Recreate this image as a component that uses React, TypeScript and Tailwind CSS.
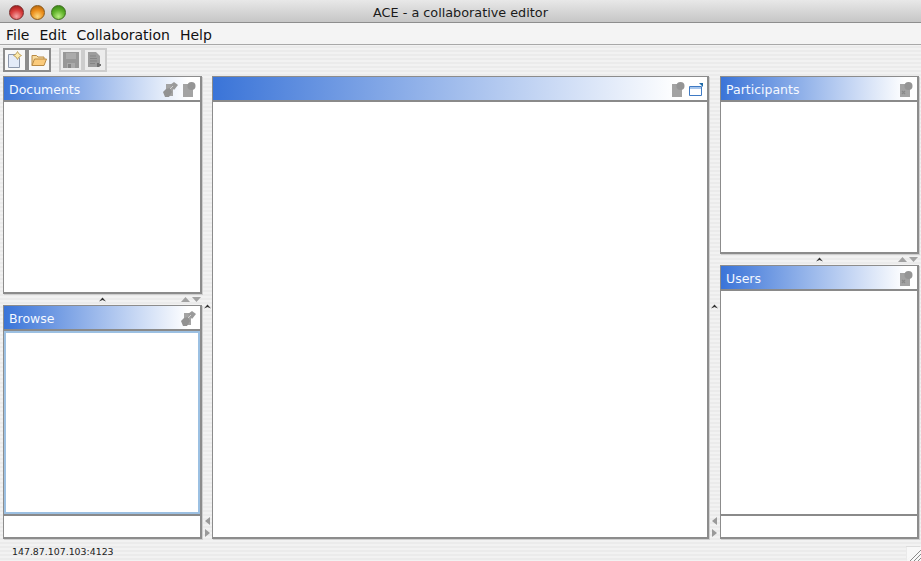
import type { ReactNode } from "react";

const FONT = "font-['DejaVu_Sans',sans-serif]";

function Lights() {
	return (
		<div className="flex items-center gap-[6px] pl-[9px]">
			<span className="h-[15px] w-[15px] rounded-full border border-[#7a2a2a] bg-[radial-gradient(circle_at_50%_80%,#f4a4a4_0%,#d83c3c_50%,#8f1414_100%)]" />
			<span className="h-[15px] w-[15px] rounded-full border border-[#8a5a1a] bg-[radial-gradient(circle_at_50%_80%,#fbd67c_0%,#ec8f1c_50%,#a85a08_100%)]" />
			<span className="h-[15px] w-[15px] rounded-full border border-[#3d6f1d] bg-[radial-gradient(circle_at_50%_80%,#b8ec80_0%,#5fb22a_50%,#2f7a10_100%)]" />
		</div>
	);
}

function ToolButton({ children, disabled }: { children: ReactNode; disabled?: boolean }) {
	return (
		<div
			className={`flex h-[24px] w-[24px] items-center justify-center border-2 ${
				disabled ? "border-[#cdcdcd] bg-[#ececec]" : "border-[#8c8c8c] bg-[#f8f8f8]"
			}`}
		>
			{children}
		</div>
	);
}

function NewIcon() {
	return (
		<svg width="16" height="18" viewBox="0 0 16 18">
			<path d="M1.5 3.5H9L12.5 7V16.5H1.5Z" fill="#e4ebf8" stroke="#8d98ac" />
			<path d="M10.5 0.5L12 3L14.5 4.5L12 6L10.5 8.5L9 6L6.5 4.5L9 3Z" fill="#fbe9ac" stroke="#b8954a" strokeWidth="0.8" />
		</svg>
	);
}

function OpenIcon() {
	return (
		<svg width="16" height="14" viewBox="0 0 16 14">
			<path d="M1 12.5V2.5H5.5L7 4H13V6" fill="#f8dca0" stroke="#b98a44" />
			<path d="M1 12.5L3.5 6H15.5L13 12.5Z" fill="#fbcb7c" stroke="#b98a44" />
		</svg>
	);
}

function SaveIcon() {
	return (
		<svg width="16" height="16" viewBox="0 0 16 16">
			<path d="M0 0H16V16H0Z" fill="#989898" />
			<path d="M3 1H13V7H3Z" fill="#ababab" />
			<path d="M4 11H12V16H4Z" fill="#ababab" />
			<path d="M5 12H8V16H5Z" fill="#868686" />
		</svg>
	);
}

function SaveAsIcon() {
	return (
		<svg width="16" height="16" viewBox="0 0 16 16">
			<path d="M1 0H9L13 4V15H1Z" fill="#9c9c9c" />
			<path d="M3 4H9M3 6.5H10M3 9H10M3 11.5H8" stroke="#858585" />
			<path d="M10 11H12V12H14V14H12V15H10Z" fill="#707070" />
		</svg>
	);
}

function UndockIcon() {
	return (
		<svg width="15" height="15" viewBox="0 0 15 15">
			<path d="M3 2H10V14H3Z" fill="#a3a3a3" />
			<path d="M7 3L11 0L15 3L11 8Z" fill="#9a9a9a" />
			<path d="M0 10L3 7L7 6L9 10L6 15H2Z" fill="#929292" />
			<path d="M7 7L10 4" stroke="#d0d0d0" />
		</svg>
	);
}

function PinIcon({ cross }: { cross?: boolean }) {
	return (
		<svg width="14" height="15" viewBox="0 0 14 15">
			<path d="M1 2H11V15H1Z" fill="#a3a3a3" />
			<circle cx="9.5" cy="4" r="4" fill="#959595" />
			{cross && <path d="M3 9L6 12M6 9L3 12" stroke="#8a8a8a" strokeWidth="1.2" />}
		</svg>
	);
}

function MaximizeIcon() {
	return (
		<svg width="14" height="13" viewBox="0 0 14 13">
			<path d="M0.5 3.5H12.5V12.5H0.5Z" fill="#fff" stroke="#3f7ac4" />
			<path d="M1 4H12V6H1Z" fill="#a8c6ec" />
			<path d="M10 0H14V4Z" fill="#1f6aa8" />
		</svg>
	);
}

function Panel({
	title,
	icons,
	className,
	children,
}: {
	title?: string;
	icons: ReactNode;
	className?: string;
	children?: ReactNode;
}) {
	return (
		<div
			className={`flex min-h-0 flex-col border border-[#8c8c8c] border-r-2 border-b-2 bg-white shadow-[1px_1px_0_#cfcfcf] ${className ?? ""}`}
		>
			<div className="flex h-[25px] shrink-0 items-center justify-between border-b-2 border-[#8a8a8a] bg-[linear-gradient(to_right,#3a74d8,#ffffff_94%)] pr-[4px] pl-[5px]">
				<span className="pt-[3px] text-[12.5px] text-[#f4f8ff]">{title}</span>
				<div className="flex items-center gap-[4px] pt-[1px]">{icons}</div>
			</div>
			{children ?? <div className="flex-1 bg-white" />}
		</div>
	);
}

function Grip() {
	return (
		<svg width="7" height="5" viewBox="0 0 7 5">
			<path d="M0 4.5L3.5 0.5L7 4.5L3.5 3Z" fill="#333" />
		</svg>
	);
}

function Tri({ up }: { up?: boolean }) {
	return (
		<svg width="9" height="5" viewBox="0 0 9 5">
			<path d={up ? "M0 5H9L4.5 0Z" : "M0 0H9L4.5 5Z"} fill="#a2a2a2" />
		</svg>
	);
}

function TriSide({ left }: { left?: boolean }) {
	return (
		<svg width="5" height="8" viewBox="0 0 5 8">
			<path d={left ? "M5 0V8L0 4Z" : "M0 0V8L5 4Z"} fill="#9a9a9a" />
		</svg>
	);
}

function HSplit() {
	return (
		<div className="relative flex h-[11px] shrink-0 items-center justify-center">
			<Grip />
			<div className="absolute right-[1px] top-[3px] flex gap-[2px]">
				<Tri up />
				<Tri />
			</div>
		</div>
	);
}

function VSplit({ className }: { className: string }) {
	return (
		<div className={`flex shrink-0 flex-col items-center justify-between pt-[228px] pb-[2px] ${className}`}>
			<Grip />
			<div className="flex flex-col gap-[4px]">
				<TriSide left />
				<TriSide />
			</div>
		</div>
	);
}

function ResizeCorner() {
	return (
		<svg className="absolute right-0 bottom-0" width="15" height="15" viewBox="0 0 15 15">
			<path d="M0 15V0.5H15" fill="#f8f8f8" stroke="#dcdcdc" />
			<path d="M15 0V15H0Z" fill="#f8f8f8" />
			<path d="M4 15L15 4M8 15L15 8M12 15L15 12" stroke="#8a8a8a" />
		</svg>
	);
}

export default function App() {
	return (
		<div
			className={`${FONT} flex h-[561px] w-[921px] flex-col overflow-hidden bg-[repeating-linear-gradient(to_bottom,#f2f2f2_0px,#f2f2f2_2px,#ebebeb_2px,#ebebeb_4px)] text-black`}
		>
			<div className="relative flex h-[23px] shrink-0 items-center border-b border-[#8e8e8e] bg-[linear-gradient(to_bottom,#e8e8e8,#c6c6c6)] pt-[3px]">
				<Lights />
				<span className="absolute inset-x-0 text-center text-[12.8px] text-[#1a1a1a]">ACE - a collaborative editor</span>
			</div>
			<div className="flex h-[22px] shrink-0 items-center gap-[10px] border-b border-[#a8a8a8] bg-[#f4f4f4] pt-[4px] pl-[6px] text-[14px] text-[#111]">
				<span>File</span>
				<span>Edit</span>
				<span>Collaboration</span>
				<span>Help</span>
			</div>
			<div className="flex h-[31px] shrink-0 items-start gap-[8px] pt-[3px] pl-[3px]">
				<div className="flex">
					<ToolButton><NewIcon /></ToolButton>
					<ToolButton><OpenIcon /></ToolButton>
				</div>
				<div className="flex">
					<ToolButton disabled><SaveIcon /></ToolButton>
					<ToolButton disabled><SaveAsIcon /></ToolButton>
				</div>
			</div>
			<div className="flex h-[463px] shrink-0 pl-[3px]">
				<div className="flex w-[199px] shrink-0 flex-col">
					<Panel
						title="Documents"
						className="h-[218px] shrink-0"
						icons={<><UndockIcon /><PinIcon /></>}
					/>
					<HSplit />
					<Panel title="Browse" className="flex-1" icons={<UndockIcon />}>
						<div className="flex-1 border-2 border-[#9cc0e2] bg-white" />
						<div className="h-[23px] shrink-0 border-t-2 border-[#8a8a8a] bg-white" />
					</Panel>
				</div>
				<VSplit className="w-[10px]" />
				<Panel className="w-[497px] shrink-0" icons={<><PinIcon /><MaximizeIcon /></>} />
				<VSplit className="w-[11px]" />
				<div className="flex w-[199px] shrink-0 flex-col">
					<Panel
						title="Participants"
						className="h-[178px] shrink-0"
						icons={<PinIcon cross />}
					/>
					<HSplit />
					<Panel title="Users" className="flex-1" icons={<PinIcon cross />}>
						<div className="flex-1 bg-white" />
						<div className="h-[23px] shrink-0 border-t-2 border-[#8a8a8a] bg-white" />
					</Panel>
				</div>
			</div>
			<div className="relative flex flex-1 items-center pt-[4px] pl-[12px] text-[9.4px] text-[#222]">
				<span>147.87.107.103:4123</span>
				<ResizeCorner />
			</div>
		</div>
	);
}
